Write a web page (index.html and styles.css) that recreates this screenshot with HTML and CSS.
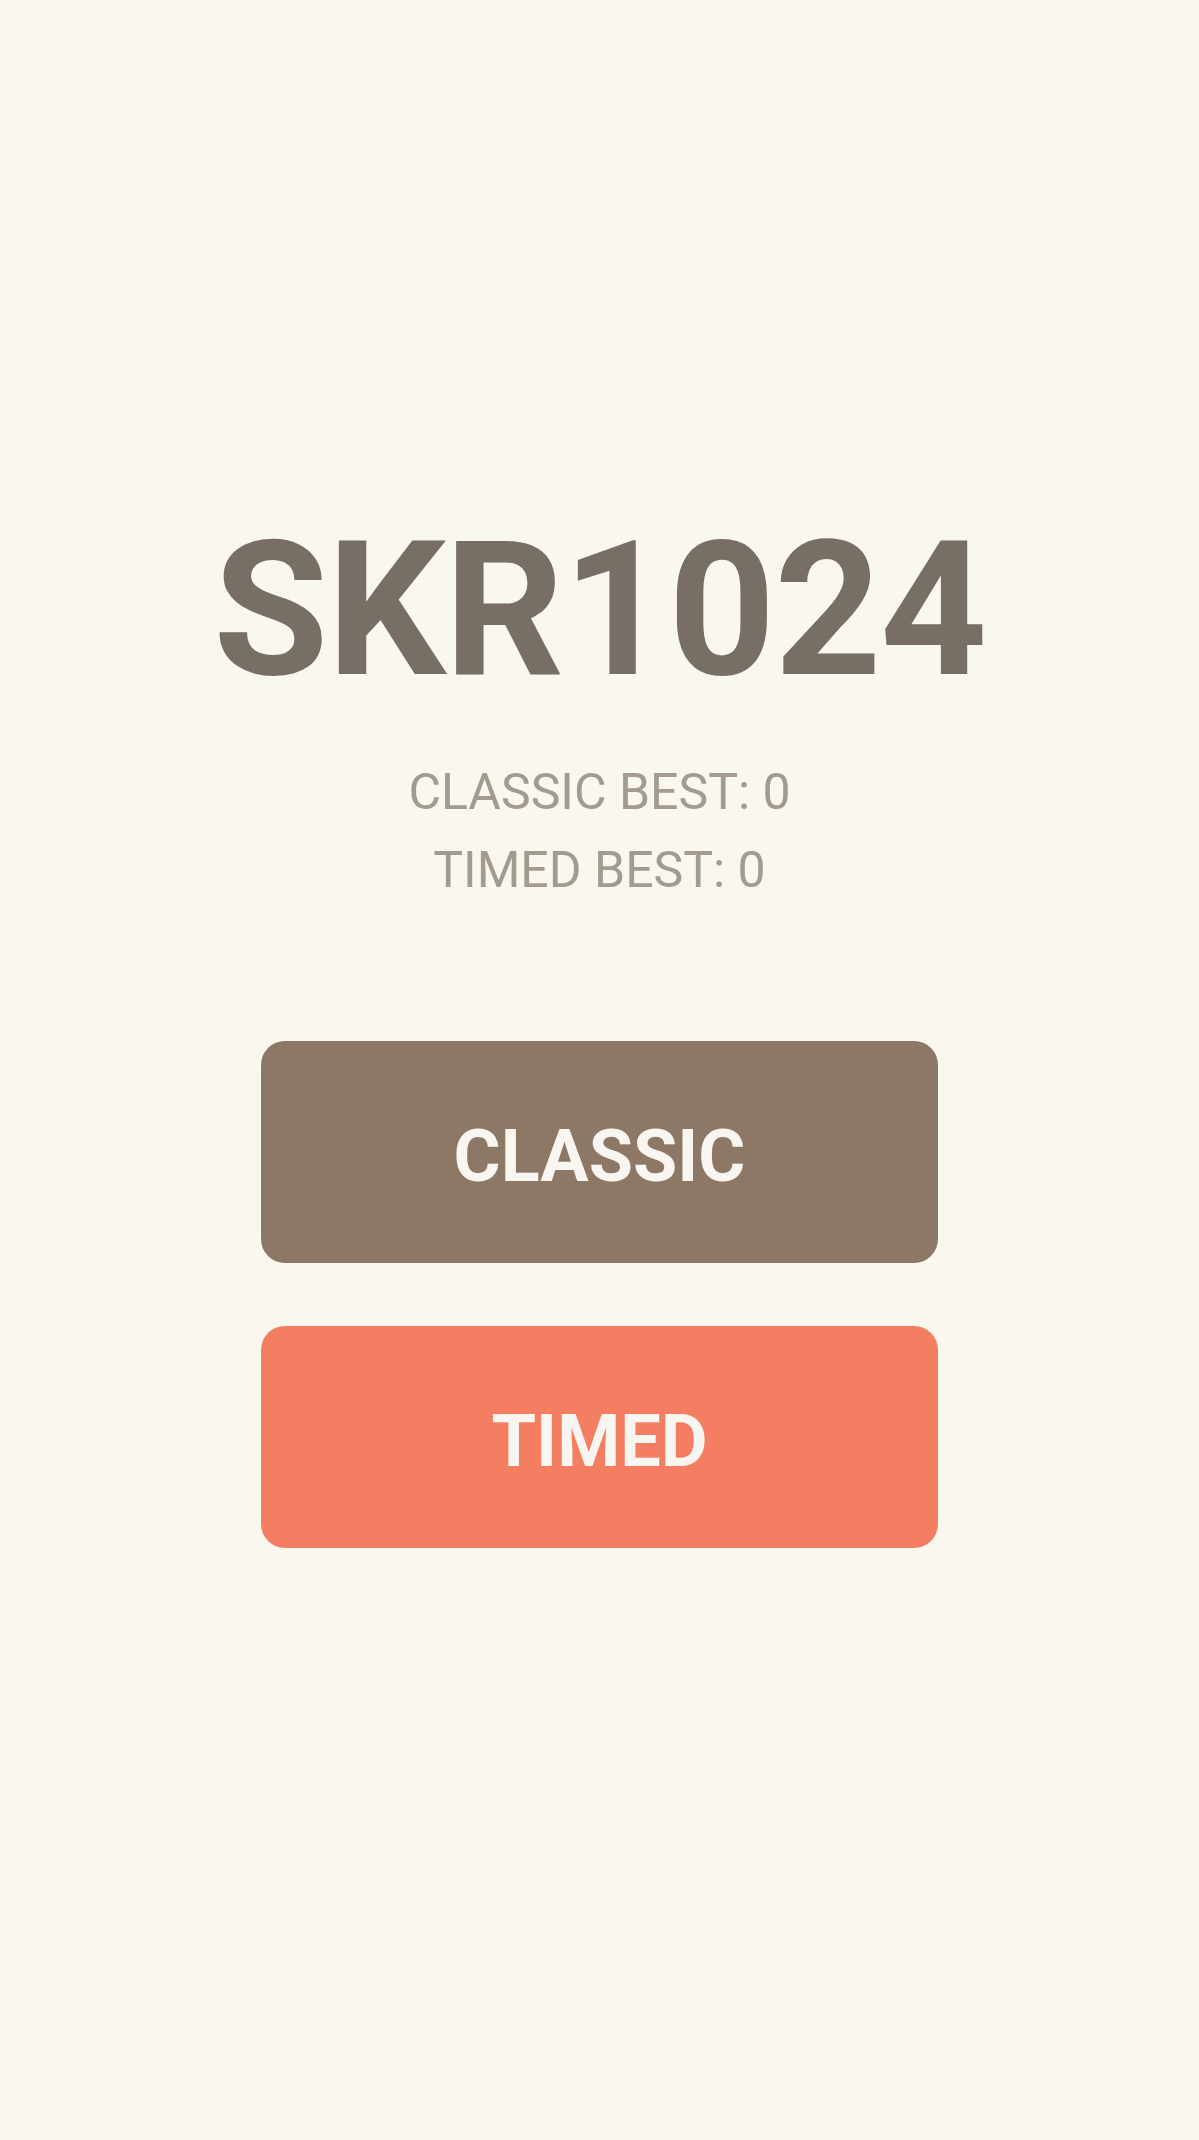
FILE: index.html
```html
<!DOCTYPE html>
<html lang="en">
<head>
<meta charset="utf-8">
<title>SKR1024</title>
<link rel="stylesheet" href="styles.css">
</head>
<body>
<main class="menu">
  <h1 class="title">SKR1024</h1>
  <div class="bests">
    <p class="best">CLASSIC BEST: 0</p>
    <p class="best">TIMED BEST: 0</p>
  </div>
  <div class="buttons">
    <button class="btn btn-classic">CLASSIC</button>
    <button class="btn btn-timed">TIMED</button>
  </div>
</main>
</body>
</html>
```
FILE: styles.css
```css
html, body {
  margin: 0;
  padding: 0;
}
body {
  background: #faf7ee;
  font-family: Roboto, "Liberation Sans", Arial, sans-serif;
  min-height: 2140px;
}
.menu {
  display: flex;
  flex-direction: column;
  align-items: center;
  padding-top: 517px;
}
.title {
  margin: 0;
  font-size: 187px;
  line-height: 187px;
  font-weight: 700;
  color: #776e65;
  letter-spacing: -1.5px;
}
.bests {
  margin-top: 49px;
  display: flex;
  flex-direction: column;
  align-items: center;
}
.best {
  margin: 0;
  font-size: 50px;
  line-height: 78px;
  color: #a39a90;
  font-weight: 400;
}
.buttons {
  margin-top: 132px;
  display: flex;
  flex-direction: column;
  gap: 63px;
}
.btn {
  width: 677px;
  height: 222px;
  border: none;
  border-radius: 24px;
  font-family: Roboto, "Liberation Sans", Arial, sans-serif;
  font-size: 72px;
  font-weight: 700;
  color: #f9f6f2;
  display: flex;
  align-items: center;
  justify-content: center;
  padding: 8px 0 0;
  cursor: pointer;
}
.btn-classic {
  background: #8d7865;
}
.btn-timed {
  background: #f37e61;
}
```
